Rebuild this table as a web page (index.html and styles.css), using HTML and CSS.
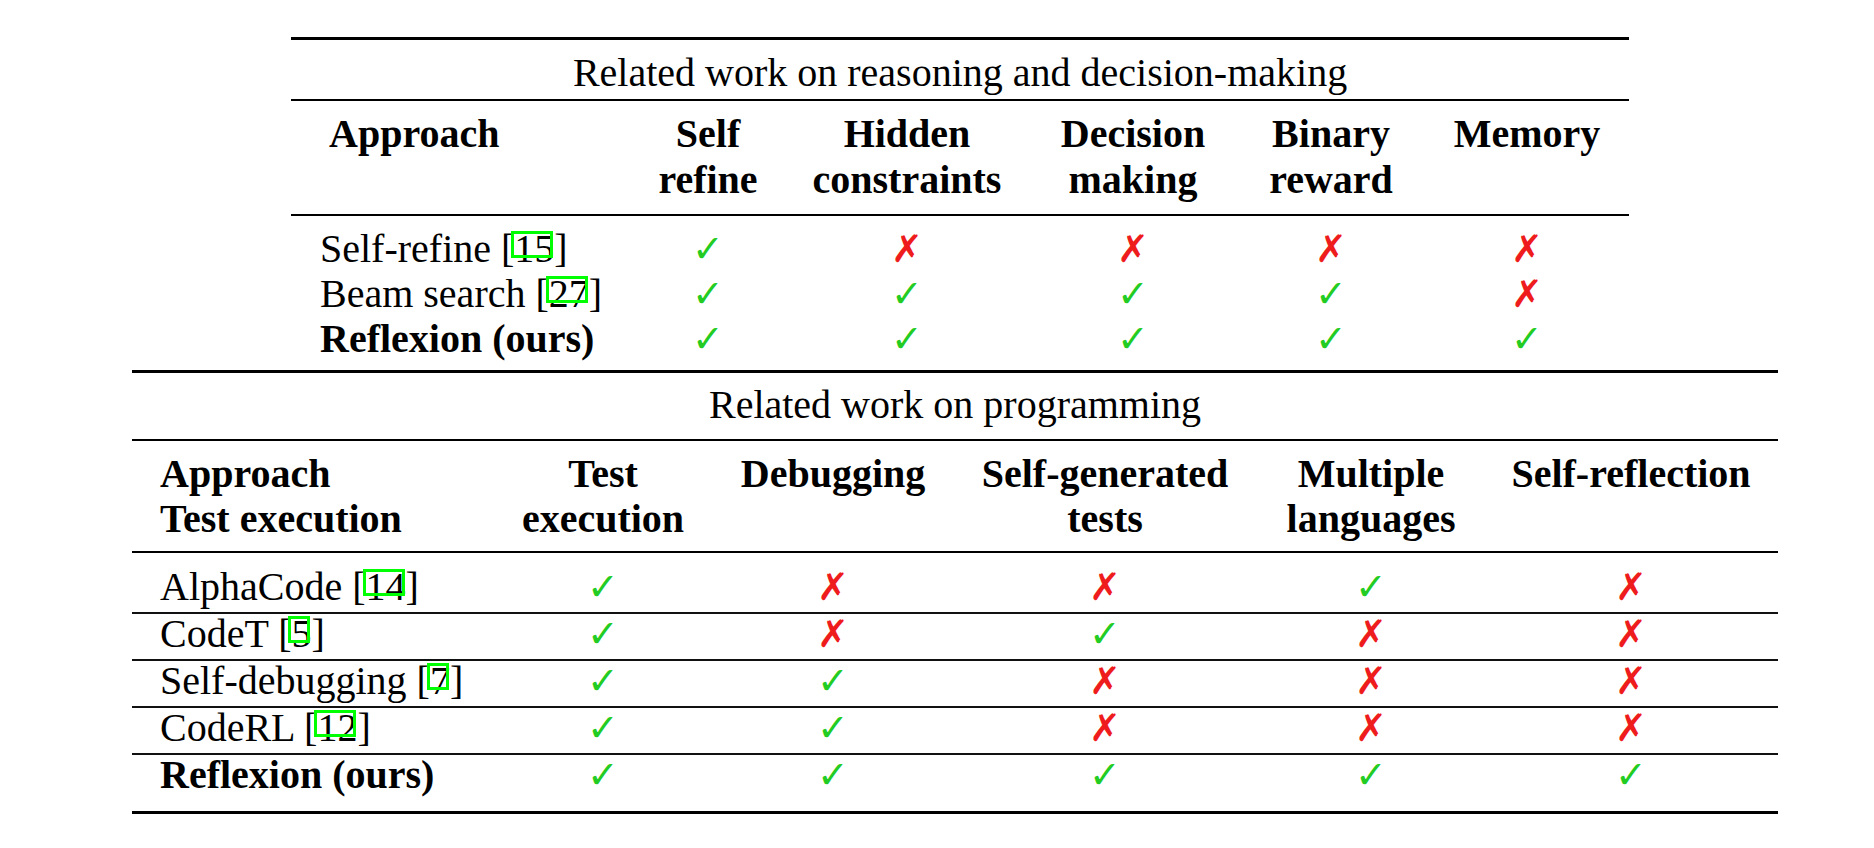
FILE: index.html
```html
<!DOCTYPE html>
<html lang="en">
<head>
    <meta charset="UTF-8">
    <meta name="viewport" content="width=device-width, initial-scale=1.0">
    <title>Related work</title>

    <link rel="stylesheet" href="styles.css">
</head>
<body>
<div class="figure">
    <table class="related reasoning">
        <colgroup>
            <col class="c-approach">
            <col class="c-self">
            <col class="c-hidden">
            <col class="c-decision">
            <col class="c-binary">
            <col class="c-memory">
        </colgroup>
        <tr class="title-row">
            <td colspan="6">Related work on reasoning and decision-making</td>
        </tr>
        <tr class="head-row">
            <th class="name head-name">Approach</th>
            <th>Self<br>refine</th>
            <th>Hidden<br>constraints</th>
            <th>Decision<br>making</th>
            <th>Binary<br>reward</th>
            <th>Memory</th>
        </tr>
        <tr class="first">
            <td class="name">Self-refine [<span class="ref">15</span>]</td>
            <td><span class="yes">&#10003;</span></td>
            <td><span class="no">&#10007;</span></td>
            <td><span class="no">&#10007;</span></td>
            <td><span class="no">&#10007;</span></td>
            <td><span class="no">&#10007;</span></td>
        </tr>
        <tr>
            <td class="name">Beam search [<span class="ref">27</span>]</td>
            <td><span class="yes">&#10003;</span></td>
            <td><span class="yes">&#10003;</span></td>
            <td><span class="yes">&#10003;</span></td>
            <td><span class="yes">&#10003;</span></td>
            <td><span class="no">&#10007;</span></td>
        </tr>
        <tr class="last">
            <td class="name"><b>Reflexion (ours)</b></td>
            <td><span class="yes">&#10003;</span></td>
            <td><span class="yes">&#10003;</span></td>
            <td><span class="yes">&#10003;</span></td>
            <td><span class="yes">&#10003;</span></td>
            <td><span class="yes">&#10003;</span></td>
        </tr>
    </table>

    <table class="related programming">
        <colgroup>
            <col class="c-approach">
            <col class="c-test">
            <col class="c-debug">
            <col class="c-generated">
            <col class="c-languages">
            <col class="c-reflection">
        </colgroup>
        <tr class="title-row">
            <td colspan="6">Related work on programming</td>
        </tr>
        <tr class="head-row">
            <th class="name">Approach<br>Test execution</th>
            <th>Test<br>execution</th>
            <th>Debugging</th>
            <th>Self-generated<br>tests</th>
            <th>Multiple<br>languages</th>
            <th>Self-reflection</th>
        </tr>
        <tr class="first">
            <td class="name">AlphaCode [<span class="ref">14</span>]</td>
            <td><span class="yes">&#10003;</span></td>
            <td><span class="no">&#10007;</span></td>
            <td><span class="no">&#10007;</span></td>
            <td><span class="yes">&#10003;</span></td>
            <td><span class="no">&#10007;</span></td>
        </tr>
        <tr>
            <td class="name">CodeT [<span class="ref">5</span>]</td>
            <td><span class="yes">&#10003;</span></td>
            <td><span class="no">&#10007;</span></td>
            <td><span class="yes">&#10003;</span></td>
            <td><span class="no">&#10007;</span></td>
            <td><span class="no">&#10007;</span></td>
        </tr>
        <tr>
            <td class="name">Self-debugging [<span class="ref">7</span>]</td>
            <td><span class="yes">&#10003;</span></td>
            <td><span class="yes">&#10003;</span></td>
            <td><span class="no">&#10007;</span></td>
            <td><span class="no">&#10007;</span></td>
            <td><span class="no">&#10007;</span></td>
        </tr>
        <tr>
            <td class="name">CodeRL [<span class="ref">12</span>]</td>
            <td><span class="yes">&#10003;</span></td>
            <td><span class="yes">&#10003;</span></td>
            <td><span class="no">&#10007;</span></td>
            <td><span class="no">&#10007;</span></td>
            <td><span class="no">&#10007;</span></td>
        </tr>
        <tr class="last">
            <td class="name"><b>Reflexion (ours)</b></td>
            <td><span class="yes">&#10003;</span></td>
            <td><span class="yes">&#10003;</span></td>
            <td><span class="yes">&#10003;</span></td>
            <td><span class="yes">&#10003;</span></td>
            <td><span class="yes">&#10003;</span></td>
        </tr>
    </table>
</div>
</body>
</html>
```

FILE: styles.css
```css
body {
    margin: 0;
    background-color: #fff;
    color: #000;
    font-family: "Liberation Serif", "Times New Roman", serif;
    font-size: 40px;
}
.figure {
    padding-top: 37px;
    margin-left: 132px;
    width: 1646px;
}

/* booktabs-like tables */
.related {
    table-layout: fixed;
    border-collapse: separate;
    border-spacing: 0;
}
.related td,
.related th {
    padding: 0;
    text-align: center;
    vertical-align: top;
    white-space: nowrap;
}
.related th {
    font-weight: bold;
    line-height: 46px;
}
.related .name {
    text-align: left;
}

.related .title-row td {
    border-top: 3px solid #000;
    border-bottom: 2px solid #000;
    line-height: 46px;
}
.related .head-row th {
    border-bottom: 2px solid #000;
}

/* upper table */
.reasoning {
    width: 1338px;
    margin-left: 159px;
}
.reasoning .c-approach { width: 340px; }
.reasoning .c-self { width: 154px; }
.reasoning .c-hidden { width: 244px; }
.reasoning .c-decision { width: 208px; }
.reasoning .c-binary { width: 188px; }
.reasoning .c-memory { width: 204px; }

.reasoning td {
    line-height: 45px;
}
.reasoning .title-row td {
    padding: 10px 0 3px;
}
.reasoning .head-row th {
    padding: 10px 0 11px;
}
.reasoning td.name {
    padding-left: 29px;
}
.reasoning th.head-name {
    padding-left: 38px;
}
.reasoning .first td {
    padding-top: 10px;
}
.reasoning .last td {
    padding-bottom: 9px;
}

/* lower table */
.programming {
    width: 1646px;
}
.programming .c-approach { width: 360px; }
.programming .c-test { width: 222px; }
.programming .c-debug { width: 238px; }
.programming .c-generated { width: 306px; }
.programming .c-languages { width: 226px; }
.programming .c-reflection { width: 294px; }

.programming td {
    line-height: 35px;
    padding: 2px 0 8px;
    border-bottom: 2px solid #111;
}
.programming .title-row td {
    padding: 9px 0 11px;
}
.programming .head-row th {
    padding: 10px 0 10px;
    line-height: 45px;
}
.programming .head-row th.name {
    padding-left: 28px;
}
.programming td.name {
    padding-left: 28px;
}
.programming .first td {
    padding-top: 16px;
}
.programming .last td {
    padding-bottom: 19px;
    border-bottom: 3px solid #000;
}

/* citation link boxes */
.ref {
    position: relative;
}
.ref::after {
    content: "";
    position: absolute;
    left: -3px;
    right: 1px;
    top: 5px;
    height: 27px;
    border: 3px solid #00ff00;
    box-sizing: border-box;
}

/* check and cross marks */
.yes,
.no {
    display: inline-block;
    height: 30px;
    line-height: 30px;
    font-family: "DejaVu Sans", sans-serif;
    font-size: 38px;
    font-weight: bold;
}
.yes {
    color: #22cc22;
}
.no {
    color: #ee1c1c;
}
```
